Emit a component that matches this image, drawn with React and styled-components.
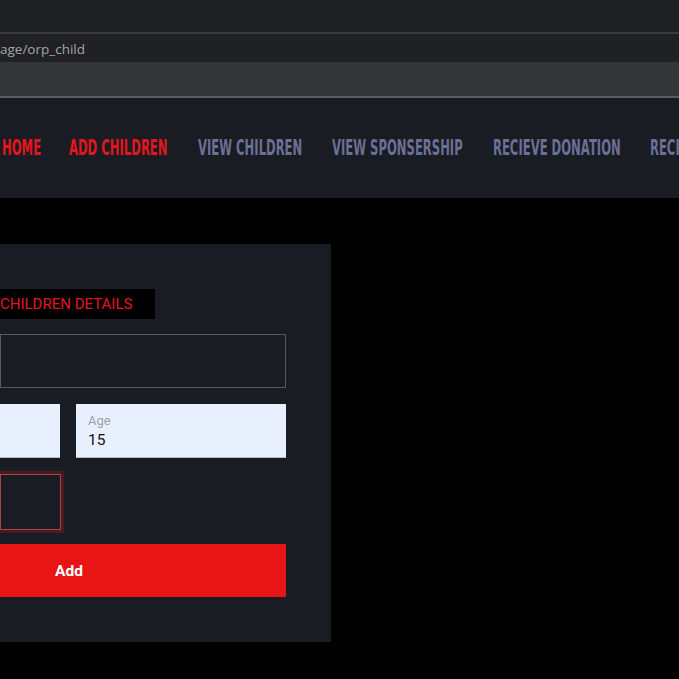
import React from 'react'
import styled, { createGlobalStyle } from 'styled-components'

const GlobalStyle = createGlobalStyle`
    html, body {
        margin: 0;
        padding: 0;
        background: #000;
        overflow: hidden;
    }
    * { box-sizing: border-box; }
`;

const navLinks = [
    { label: 'HOME', width: 38, active: true },
    { label: 'ADD CHILDREN', width: 101, active: true },
    { label: 'VIEW CHILDREN', width: 105 },
    { label: 'VIEW SPONSERSHIP', width: 133 },
    { label: 'RECIEVE DONATION', width: 128 },
    { label: 'RECIEVED SPONSERSHIP', width: 170 },
];

const App = () => {
    return (
        <>
            <GlobalStyle />
            <Page>
                <Chrome>
                    <TabStrip />
                    <ChromeLine />
                    <UrlBar>age/orp_child</UrlBar>
                    <Toolbar />
                    <ChromeLine light />
                </Chrome>
                <Nav>
                    {navLinks.map((link) => (
                        <NavItem key={link.label} w={link.width}>
                            <NavLabel active={link.active}>{link.label}</NavLabel>
                        </NavItem>
                    ))}
                </Nav>
                <Main>
                    <Panel>
                        <Title>CHILDREN DETAILS</Title>
                        <Field />
                        <Row>
                            <LightField small />
                            <LightField>
                                <FieldLabel>Age</FieldLabel>
                                <FieldValue>15</FieldValue>
                            </LightField>
                        </Row>
                        <ErrorField />
                        <AddButton>Add</AddButton>
                    </Panel>
                </Main>
            </Page>
        </>
    )
}

const Page = styled.div`
    width: 679px;
    min-height: 679px;
    background: #000;
    overflow: hidden;
`;

const Chrome = styled.div`
    display: flex;
    flex-direction: column;
`;

const TabStrip = styled.div`
    height: 32px;
    background: #1f2023;
`;

const ChromeLine = styled.div`
    height: 2px;
    background: ${(p) => (p.light ? '#5c5d60' : '#393a3d')};
`;

const UrlBar = styled.div`
    height: 28px;
    background: #202124;
    color: #a3a4a6;
    font-family: "Open Sans", "Noto Sans", sans-serif;
    font-size: 13.5px;
    line-height: 30px;
    white-space: nowrap;
`;

const Toolbar = styled.div`
    height: 34px;
    background: #343538;
`;

const Nav = styled.nav`
    height: 100px;
    background: #1a1c23;
    display: flex;
    align-items: center;
    gap: 28.6px;
    padding-left: 2px;
    white-space: nowrap;
    overflow: hidden;
`;

const NavItem = styled.div`
    flex: 0 0 auto;
    width: ${(p) => p.w}px;
    min-width: 0;
    height: 26px;
`;

const NavLabel = styled.span`
    display: inline-block;
    font-family: "DejaVu Sans", sans-serif;
    font-weight: bold;
    font-size: 21.5px;
    line-height: 26px;
    color: ${(p) => (p.active ? '#e3161e' : '#6a7096')};
    transform: scaleX(0.54);
    transform-origin: left center;
`;

const Main = styled.main`
    padding-top: 46px;
`;

const Panel = styled.section`
    width: 331px;
    background: #1a1c23;
    padding: 45px 45px 45px 0;
    display: flex;
    flex-direction: column;
    font-family: Roboto, "Liberation Sans", sans-serif;
`;

const Title = styled.div`
    width: 155px;
    height: 30px;
    background: #000;
    color: #e3161e;
    font-size: 15px;
    line-height: 31px;
    white-space: nowrap;
    margin-bottom: 15px;
`;

const Field = styled.div`
    height: 54px;
    border: 1px solid #555963;
    background: #1a1c23;
    margin-bottom: 16px;
`;

const Row = styled.div`
    display: flex;
    gap: 16px;
    margin-bottom: 16px;
`;

const LightField = styled.div`
    flex: ${(p) => (p.small ? '0 0 60px' : '1')};
    height: 54px;
    background: #e8f0fe;
    border-bottom: 1px solid #b8bcc4;
    padding: 9px 12px 0;
    display: flex;
    flex-direction: column;
`;

const FieldLabel = styled.span`
    color: #9aa0a8;
    font-size: 13px;
    line-height: 16px;
`;

const FieldValue = styled.span`
    color: #111;
    font-size: 15.5px;
    line-height: 23px;
`;

const ErrorField = styled.div`
    width: 61px;
    height: 56px;
    border: 1px solid #a4464c;
    box-shadow: 0 0 0 3px #4a1a20;
    background: #1a1c23;
    margin-bottom: 14px;
`;

const AddButton = styled.button`
    height: 53px;
    border: none;
    background: #e81416;
    color: #fff;
    font-family: Roboto, "Liberation Sans", sans-serif;
    font-weight: bold;
    font-size: 15.5px;
    text-align: left;
    padding: 0 0 0 55px;
`;

export default App
